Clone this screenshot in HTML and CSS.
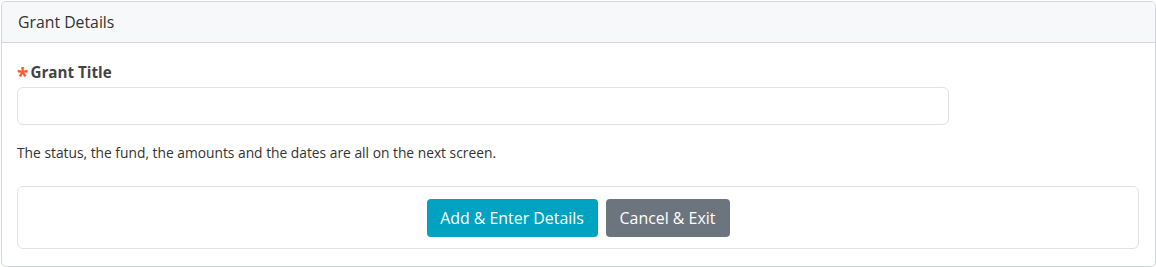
FILE: index.html
```html
<!DOCTYPE html>
<html>
<head>
<meta charset="utf-8">
<link rel="stylesheet" href="styles.css">
</head>
<body>
<div class="card">
  <div class="card-header">Grant Details</div>
  <div class="card-body">
    <label class="field-label"><span class="req">*</span>Grant Title</label>
    <input class="text-input" type="text">
    <p class="help">The status, the fund, the amounts and the dates are all on the next screen.</p>
    <div class="actions">
      <button class="btn btn-primary">Add &amp; Enter Details</button>
      <button class="btn btn-secondary">Cancel &amp; Exit</button>
    </div>
  </div>
</div>
</body>
</html>
```
FILE: styles.css
```css
html, body { margin: 0; padding: 0; background: #fff; }
body { padding: 1px 0 0 1px; font-family: "Open Sans", "Lato", sans-serif; color: #3a3b3d; }
.card {
  width: 1155px;
  box-sizing: border-box;
  border: 1px solid #d3d5d8;
  border-radius: 5px;
  overflow: hidden;
}
.card-header {
  height: 41px;
  box-sizing: border-box;
  background: #f7f8fa;
  border-bottom: 1px solid #d3d5d8;
  padding: 0 16px;
  display: flex;
  align-items: center;
  font-size: 15.8px;
  color: #333;
}
.card-body {
  padding: 19px 16px 17px 15px;
  display: flex;
  flex-direction: column;
  align-items: flex-start;
}
.field-label {
  font-size: 15.2px;
  font-weight: 700;
  color: #444;
  line-height: 20px;
  display: flex;
  align-items: center;
}
.req { color: #ff5a1f; margin-right: 2px; font-size: 21px; line-height: 20px; position: relative; top: 3px; }
.text-input {
  margin-top: 5px;
  width: 932px;
  height: 38px;
  box-sizing: border-box;
  border: 1px solid #dfe1e5;
  border-radius: 6px;
  font: inherit;
  padding: 0 12px;
}
.help {
  margin: 19px 0 0 0;
  font-size: 13.8px;
  line-height: 18px;
  color: #333;
}
.actions {
  margin-top: 24px;
  align-self: stretch;
  border: 1px solid #dfe1e5;
  border-radius: 6px;
  height: 63px;
  box-sizing: border-box;
  display: flex;
  justify-content: center;
  align-items: center;
  gap: 8px;
}
.btn {
  height: 38px;
  border: none;
  border-radius: 4px;
  color: #fff;
  font-family: inherit;
  font-size: 15.9px;
  padding: 0 6px;
  cursor: pointer;
}
.btn-primary { background: #00a2c1; width: 171px; }
.btn-secondary { background: #6c757d; width: 124px; }
```
